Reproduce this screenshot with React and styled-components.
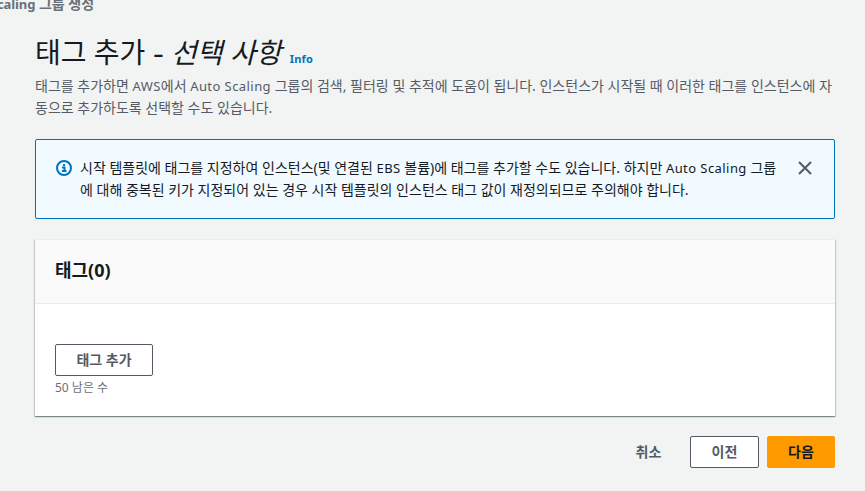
import React from "react";
import styled, { createGlobalStyle } from "styled-components";

const GlobalStyle = createGlobalStyle`
  *, *::before, *::after { box-sizing: border-box; }
  body {
    margin: 0;
    background: #f2f3f3;
    color: #16191f;
    font-family: "Noto Sans", "Noto Sans CJK KR", sans-serif;
    font-size: 14px;
    line-height: 22px;
    overflow: hidden;
  }
`;

const Page = styled.div`
  display: flex;
  flex-direction: column;
  width: 865px;
  height: 491px;
  overflow: hidden;
`;

const Breadcrumb = styled.div`
  height: 16px;
  margin: -7px 0 0 -3px;
  color: #687078;
  font-weight: 700;
  white-space: nowrap;
`;

const Content = styled.main`
  display: flex;
  flex-direction: column;
  width: 800px;
  margin: 25px 0 0 35px;
`;

const Title = styled.h1`
  display: flex;
  align-items: baseline;
  height: 36px;
  margin: 0;
  font-size: 28px;
  font-weight: 400;
  line-height: 36px;
  white-space: pre;
`;

const Optional = styled.i`
  letter-spacing: 0.1px;
`;

const Dash = styled.span`
  display: inline-block;
  width: 11px;
  transform: scaleX(1.2);
  transform-origin: left;
`;

const InfoLink = styled.a`
  margin-left: 8px;
  color: #0073bb;
  font-size: 11px;
  font-weight: 700;
  letter-spacing: 0.2px;
  line-height: 20px;
`;

const Latin = styled.span`
  font-size: 13px;
  letter-spacing: ${(p) => p.$track ?? 0.43}px;
`;

const Description = styled.p`
  margin: 5px 0 0;
  color: #545b64;
`;

const Line = styled.span`
  display: block;
  white-space: nowrap;
`;

const Alert = styled.section`
  display: flex;
  align-items: flex-start;
  height: 80px;
  margin-top: 20px;
  padding: 17px 21px 0 20px;
  border: 1px solid #0073bb;
  border-radius: 2px;
  background: #f1faff;
`;

const AlertText = styled.div`
  flex: 1;
  margin-left: 8px;
`;

const Icon = styled.svg`
  display: block;
  flex: none;
  width: 16px;
  height: 16px;
  margin-top: 3px;
  fill: none;
  stroke: ${(p) => p.$color};
  stroke-width: 2;
`;

const Panel = styled.section`
  height: 177px;
  margin-top: 20px;
  background: #fff;
  box-shadow: 0 1px 1px 0 rgba(0, 28, 36, 0.3), 1px 1px 1px 0 rgba(0, 28, 36, 0.15),
    -1px 1px 1px 0 rgba(0, 28, 36, 0.15);
  border-top: 1px solid #eaeded;
`;

const PanelHeader = styled.header`
  height: 64px;
  padding: 19px 20px;
  border-bottom: 1px solid #eaeded;
  background: #fafafa;
`;

const PanelTitle = styled.h2`
  margin: 0;
  font-size: 18px;
  font-weight: 700;
  line-height: 22px;
`;

const PanelBody = styled.div`
  display: flex;
  flex-direction: column;
  align-items: flex-start;
  padding: 40px 20px 0;
`;

const Button = styled.button`
  display: inline-flex;
  align-items: center;
  justify-content: center;
  width: ${(p) => p.$width}px;
  height: 32px;
  padding: 0;
  border: 1px solid ${(p) => (p.$kind === "normal" ? "#545b64" : p.$kind === "primary" ? "#ff9900" : "transparent")};
  border-radius: 2px;
  background: ${(p) => (p.$kind === "normal" ? "#fff" : p.$kind === "primary" ? "#ff9900" : "transparent")};
  color: ${(p) => (p.$kind === "primary" ? "#16191f" : "#545b64")};
  font: inherit;
  font-weight: 700;
  white-space: nowrap;
`;

const Hint = styled.div`
  margin-top: 2px;
  color: #687078;
  font-size: 12px;
  line-height: 20px;
`;

const Actions = styled.footer`
  display: flex;
  justify-content: flex-end;
  gap: 8px;
  margin-top: 20px;
`;

export default function App() {
  return (
    <>
      <GlobalStyle />
      <Page>
        <Breadcrumb><Latin $track={-0.1}>caling</Latin> 그룹 생성</Breadcrumb>
        <Content>
          <Title>
            <span>태그 추가 <Dash>-</Dash> <Optional>선택 사항</Optional></span>
            <InfoLink>Info</InfoLink>
          </Title>
          <Description>
            <Line>태그를 추가하면 <Latin>AWS</Latin>에서 <Latin>Auto Scaling</Latin> 그룹의 검색, 필터링 및 추적에 도움이 됩니다. 인스턴스가 시작될 때 이러한 태그를 인스턴스에 자</Line>
            <Line>동으로 추가하도록 선택할 수도 있습니다.</Line>
          </Description>
          <Alert>
            <Icon viewBox="0 0 16 16" $color="#0073bb">
              <circle cx="8" cy="8" r="7" />
              <path d="M7 5h2M6 7.5h2.5V11M6 11h4.5" />
            </Icon>
            <AlertText>
              <Line>시작 템플릿에 태그를 지정하여 인스턴스(및 연결된 <Latin>EBS</Latin> 볼륨)에 태그를 추가할 수도 있습니다. 하지만 <Latin>Auto Scaling</Latin> 그룹</Line>
              <Line>에 대해 중복된 키가 지정되어 있는 경우 시작 템플릿의 인스턴스 태그 값이 재정의되므로 주의해야 합니다.</Line>
            </AlertText>
            <Icon viewBox="0 0 16 16" $color="#545b64">
              <path d="M2 2l12 12M14 2L2 14" />
            </Icon>
          </Alert>
          <Panel>
            <PanelHeader>
              <PanelTitle>태그(0)</PanelTitle>
            </PanelHeader>
            <PanelBody>
              <Button $kind="normal" $width={98}>태그 추가</Button>
              <Hint>50 남은 수</Hint>
            </PanelBody>
          </Panel>
          <Actions>
            <Button $kind="link" $width={67}>취소</Button>
            <Button $kind="normal" $width={69}>이전</Button>
            <Button $kind="primary" $width={68}>다음</Button>
          </Actions>
        </Content>
      </Page>
    </>
  );
}
